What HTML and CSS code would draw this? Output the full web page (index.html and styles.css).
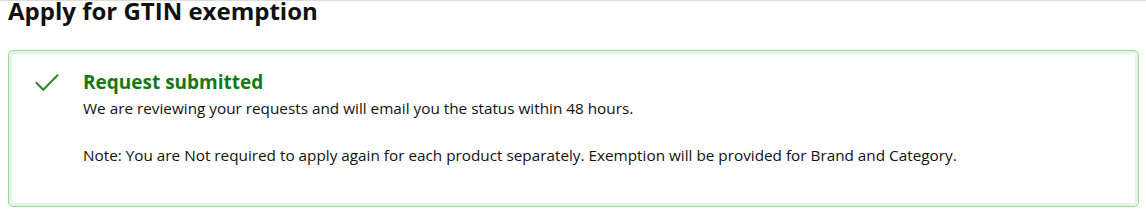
FILE: index.html
```html
<!DOCTYPE html>
<html>
<head>
<meta charset="utf-8">
<link rel="stylesheet" href="styles.css">
</head>
<body>
<div class="page">
  <h1 class="title">Apply for GTIN exemption</h1>
  <div class="alert">
    <div class="alert-icon">
      <svg width="24" height="18" viewBox="0 0 24 18"><path d="M0.8 8.2 L8.3 15.8 L23 0.8" fill="none" stroke="#2a8a2a" stroke-width="2"/></svg>
    </div>
    <div class="alert-body">
      <div class="alert-heading">Request submitted</div>
      <p class="alert-text">We are reviewing your requests and will email you the status within 48 hours.</p>
      <p class="alert-text note">Note: You are Not required to apply again for each product separately. Exemption will be provided for Brand and Category.</p>
    </div>
  </div>
</div>
</body>
</html>
```
FILE: styles.css
```css
html, body { margin: 0; padding: 0; background: #fff; }
body { font-family: "Open Sans", "Noto Sans", sans-serif; color: #111; }
.page { border-top: 1px solid #dcdcdc; padding: 0 7px 0 8px; }
.title { margin: 0; font-size: 24px; font-weight: 700; line-height: 20px; color: #111; }
.alert {
  margin-top: 29px;
  border: 1px solid #9fd89f;
  box-shadow: inset 0 0 0 3px #e3f6e3;
  border-radius: 5px;
  display: flex;
  padding: 19px 20px 41px 26px;
}
.alert-icon { width: 48px; padding-top: 4px; }
.alert-heading { color: #137a13; font-weight: 700; font-size: 19px; line-height: 24px; }
.alert-text { margin: 4px 0 0; font-size: 15.3px; line-height: 20px; }
.alert-text.note { margin-top: 27px; }
```
